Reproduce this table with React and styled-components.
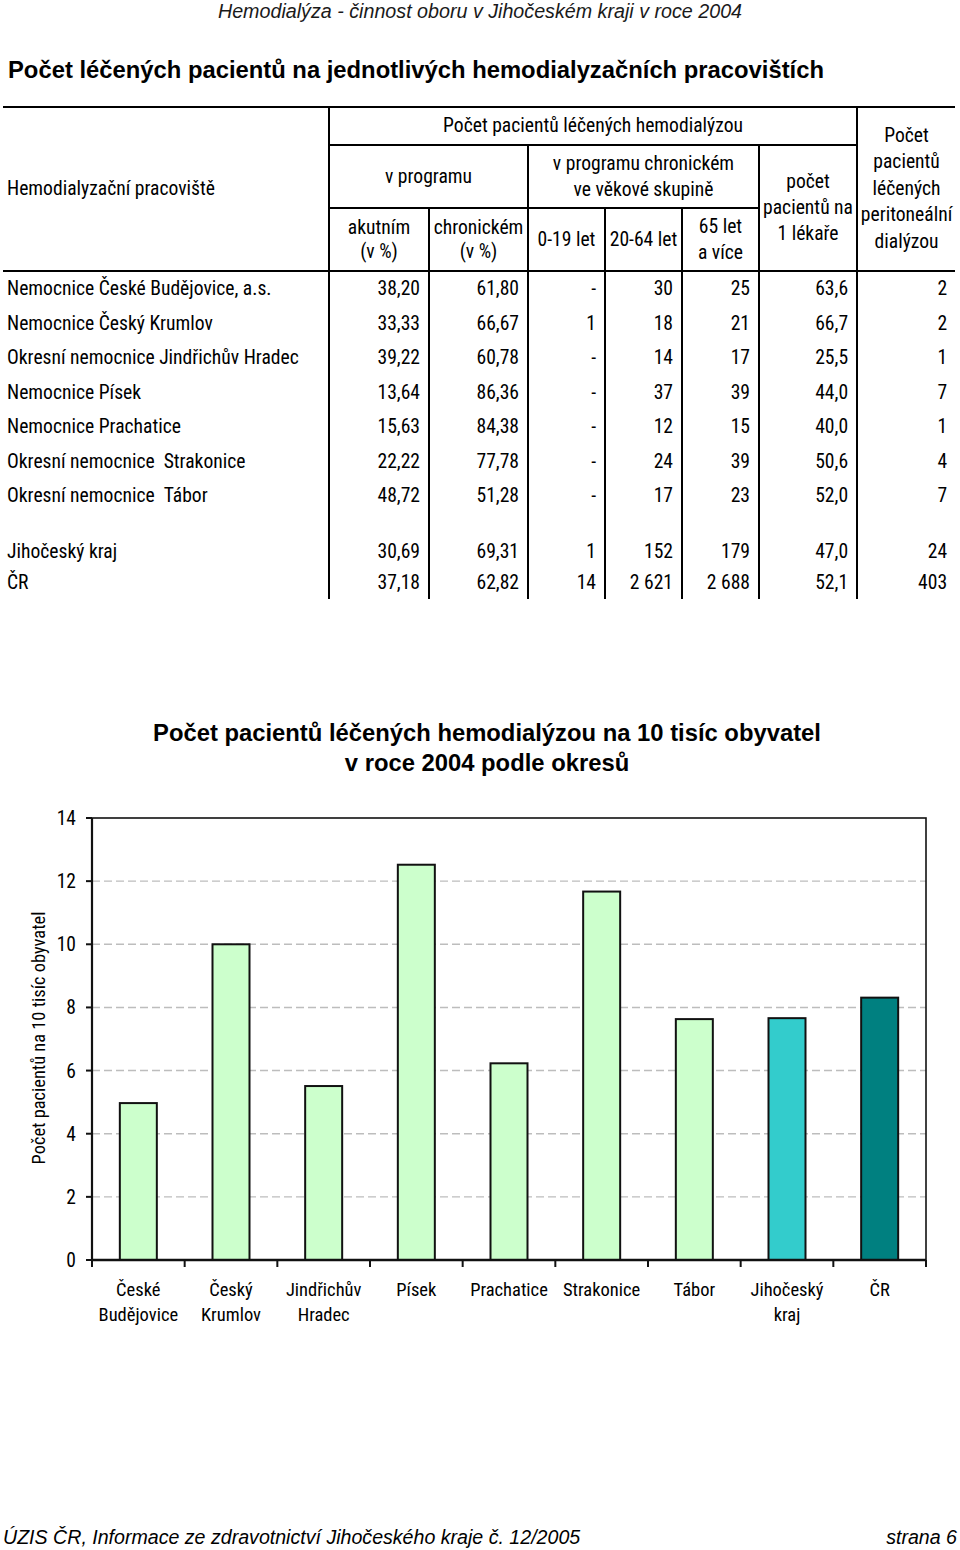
import React from "react";
import styled, { createGlobalStyle } from "styled-components";

const WIDE = '"Liberation Sans", Arial, sans-serif';
const NARROW = 'Roboto, "Liberation Sans", Arial, sans-serif';

const Global = createGlobalStyle`
  html, body { margin: 0; padding: 0; background: #fff; }
  body { font-family: ${WIDE}; color: #000; }
`;

const Page = styled.div`
  width: 960px;
  height: 1550px;
  display: flex;
  flex-direction: column;
  box-sizing: border-box;
  overflow: hidden;
`;

const RunningHead = styled.div`
  font-style: italic;
  font-size: 19.7px;
  line-height: 22px;
  text-align: center;
  color: #1a1a1a;
`;

const Title = styled.h1`
  margin: 34px 0 0 8px;
  font-size: 23.8px;
  line-height: 28px;
  font-weight: bold;
`;

const Table = styled.table`
  margin: 22px 0 0 3px;
  width: 952px;
  border-collapse: collapse;
  table-layout: fixed;
  font-family: ${NARROW};
  font-stretch: condensed;
  font-size: 19.6px;
  border-top: 2px solid #000;
`;

const Th = styled.th`
  font-weight: normal;
  text-align: ${(p) => p.$align || "center"};
  vertical-align: middle;
  line-height: ${(p) => p.$lh || "25.5px"};
  padding: 0 ${(p) => (p.$align === "left" ? "4px" : "0")};
  border-right: ${(p) => (p.$noRight ? "none" : "2px solid #000")};
  border-bottom: ${(p) => (p.$bottom ? "2px solid #000" : "none")};
  height: ${(p) => p.$h || "auto"};
  white-space: nowrap;
`;

const Td = styled.td`
  text-align: ${(p) => (p.$name ? "left" : "right")};
  padding-top: 0;
  padding-bottom: 0;
  padding-left: ${(p) => (p.$name ? "4px" : "0")};
  padding-right: ${(p) => (p.$name ? "0" : "8px")};
  border-right: ${(p) => (p.$last ? "none" : "2px solid #000")};
  height: ${(p) => p.$h};
  line-height: 20px;
  white-space: nowrap;
`;

const ChartTitle = styled.h2`
  margin: 119px 0 0 0;
  padding-left: 14px;
  font-size: 23.8px;
  line-height: 30px;
  font-weight: bold;
  text-align: center;
`;

const ChartSvg = styled.svg`
  display: block;
  margin-top: 27px;
  font-family: ${NARROW};
  font-stretch: condensed;
`;

const Footer = styled.div`
  margin-top: auto;
  display: flex;
  justify-content: space-between;
  font-style: italic;
  font-size: 19.6px;
  line-height: 22px;
  padding: 0 3px 2px 3px;
`;

const rows = [
  ["Nemocnice České Budějovice, a.s.", "38,20", "61,80", "-", "30", "25", "63,6", "2"],
  ["Nemocnice Český Krumlov", "33,33", "66,67", "1", "18", "21", "66,7", "2"],
  ["Okresní nemocnice Jindřichův Hradec", "39,22", "60,78", "-", "14", "17", "25,5", "1"],
  ["Nemocnice Písek", "13,64", "86,36", "-", "37", "39", "44,0", "7"],
  ["Nemocnice Prachatice", "15,63", "84,38", "-", "12", "15", "40,0", "1"],
  ["Okresní nemocnice  Strakonice", "22,22", "77,78", "-", "24", "39", "50,6", "4"],
  ["Okresní nemocnice  Tábor", "48,72", "51,28", "-", "17", "23", "52,0", "7"],
];
const totals = [
  ["Jihočeský kraj", "30,69", "69,31", "1", "152", "179", "47,0", "24"],
  ["ČR", "37,18", "62,82", "14", "2 621", "2 688", "52,1", "403"],
];

const DataRow = ({ r, h }) => (
  <tr>
    {r.map((v, i) => (
      <Td key={i} $name={i === 0} $last={i === 7} $h={h}>
        {v.replace(/ /g, "\u00a0")}
      </Td>
    ))}
  </tr>
);

const bars = [
  { label: ["České", "Budějovice"], v: 4.97, c: "#CCFFCC" },
  { label: ["Český", "Krumlov"], v: 10.0, c: "#CCFFCC" },
  { label: ["Jindřichův", "Hradec"], v: 5.51, c: "#CCFFCC" },
  { label: ["Písek"], v: 12.52, c: "#CCFFCC" },
  { label: ["Prachatice"], v: 6.23, c: "#CCFFCC" },
  { label: ["Strakonice"], v: 11.67, c: "#CCFFCC" },
  { label: ["Tábor"], v: 7.63, c: "#CCFFCC" },
  { label: ["Jihočeský", "kraj"], v: 7.66, c: "#33CCCC" },
  { label: ["ČR"], v: 8.31, c: "#008080" },
];

// chart coordinates (svg origin at page y = OY)
const OY = 805;
const X0 = 92;
const X1 = 926;
const YT = 818 - OY;
const YB = 1260 - OY;
const unit = (YB - YT) / 14;
const cw = (X1 - X0) / 9;

function Chart() {
  const ticks = [0, 2, 4, 6, 8, 10, 12, 14];
  return (
    <ChartSvg width="960" height="545" viewBox="0 0 960 545">
      {ticks.slice(1, -1).map((t) => (
        <line
          key={"g" + t}
          x1={X0}
          x2={X1}
          y1={YB - t * unit}
          y2={YB - t * unit}
          stroke="#bdbdbd"
          strokeWidth="1.4"
          strokeDasharray="8 4"
        />
      ))}
      {bars.map((b, i) => {
        const cx = X0 + cw * (i + 0.5);
        const w = 37;
        const h = b.v * unit;
        return (
          <rect
            key={"b" + i}
            x={cx - w / 2}
            y={YB - h}
            width={w}
            height={h}
            fill={b.c}
            stroke="#111"
            strokeWidth="2"
          />
        );
      })}
      <rect x={X0} y={YT} width={X1 - X0} height={YB - YT} fill="none" stroke="#111" strokeWidth="1.6" />
      <line x1={X0} x2={X1} y1={YB} y2={YB} stroke="#111" strokeWidth="2.6" />
      <line x1={X0} x2={X0} y1={YT} y2={YB} stroke="#111" strokeWidth="2.2" />
      {ticks.map((t) => (
        <g key={"t" + t}>
          <line x1={X0 - 6} x2={X0} y1={YB - t * unit} y2={YB - t * unit} stroke="#111" strokeWidth="2" />
          <text x={76} y={YB - t * unit + 7} textAnchor="end" fontSize="19.5">
            {t}
          </text>
        </g>
      ))}
      {Array.from({ length: 10 }).map((_, i) => (
        <line key={"x" + i} x1={X0 + cw * i} x2={X0 + cw * i} y1={YB} y2={YB + 7} stroke="#111" strokeWidth="2" />
      ))}
      {bars.map((b, i) =>
        b.label.map((l, j) => (
          <text
            key={"l" + i + j}
            x={X0 + cw * (i + 0.5)}
            y={1289 - OY + 7 + j * 25}
            textAnchor="middle"
            fontSize="18.5"
          >
            {l}
          </text>
        ))
      )}
      <text
        transform={`translate(${45},${1038 - OY}) rotate(-90)`}
        textAnchor="middle"
        fontSize="18.4"
      >
        Počet pacientů na 10 tisíc obyvatel
      </text>
    </ChartSvg>
  );
}

export default function App() {
  return (
    <Page>
      <Global />
      <RunningHead>Hemodialýza - činnost oboru v Jihočeském kraji v roce 2004</RunningHead>
      <Title>Počet léčených pacientů na jednotlivých hemodialyzačních pracovištích</Title>
      <Table>
        <colgroup>
          <col style={{ width: 326 }} />
          <col style={{ width: 100 }} />
          <col style={{ width: 99 }} />
          <col style={{ width: 77 }} />
          <col style={{ width: 77 }} />
          <col style={{ width: 77 }} />
          <col style={{ width: 98 }} />
          <col style={{ width: 98 }} />
        </colgroup>
        <thead>
          <tr>
            <Th rowSpan={3} $align="left" $bottom>
              Hemodialyzační pracoviště
            </Th>
            <Th colSpan={6} $bottom $h="36px">
              Počet pacientů léčených hemodialýzou
            </Th>
            <Th rowSpan={3} $noRight $bottom $lh="26.5px">
              Počet
              <br />
              pacientů
              <br />
              léčených
              <br />
              peritoneální
              <br />
              dialýzou
            </Th>
          </tr>
          <tr>
            <Th colSpan={2} $bottom $h="61px">
              v programu
            </Th>
            <Th colSpan={3} $bottom $lh="26px">
              v programu chronickém
              <br />
              ve věkové skupině
            </Th>
            <Th rowSpan={2} $bottom $lh="26px">
              počet
              <br />
              pacientů na
              <br />1 lékaře
            </Th>
          </tr>
          <tr>
            <Th $bottom $h="61px" $lh="24px">
              akutním
              <br />
              (v %)
            </Th>
            <Th $bottom $lh="24px">
              chronickém
              <br />
              (v %)
            </Th>
            <Th $bottom>0-19 let</Th>
            <Th $bottom>20-64 let</Th>
            <Th $bottom $lh="26px">
              65 let
              <br />a více
            </Th>
          </tr>
        </thead>
        <tbody>
          {rows.map((r, i) => (
            <DataRow key={i} r={r} h="34.5px" />
          ))}
          <DataRow r={["", "", "", "", "", "", "", ""]} h="23px" />
          {totals.map((r, i) => (
            <DataRow key={"t" + i} r={r} h="31px" />
          ))}
        </tbody>
      </Table>
      <ChartTitle>
        Počet pacientů léčených hemodialýzou na 10 tisíc obyvatel
        <br />v roce 2004 podle okresů
      </ChartTitle>
      <Chart />
      <Footer>
        <span>ÚZIS ČR, Informace ze zdravotnictví Jihočeského kraje č. 12/2005</span>
        <span>strana 6</span>
      </Footer>
    </Page>
  );
}
